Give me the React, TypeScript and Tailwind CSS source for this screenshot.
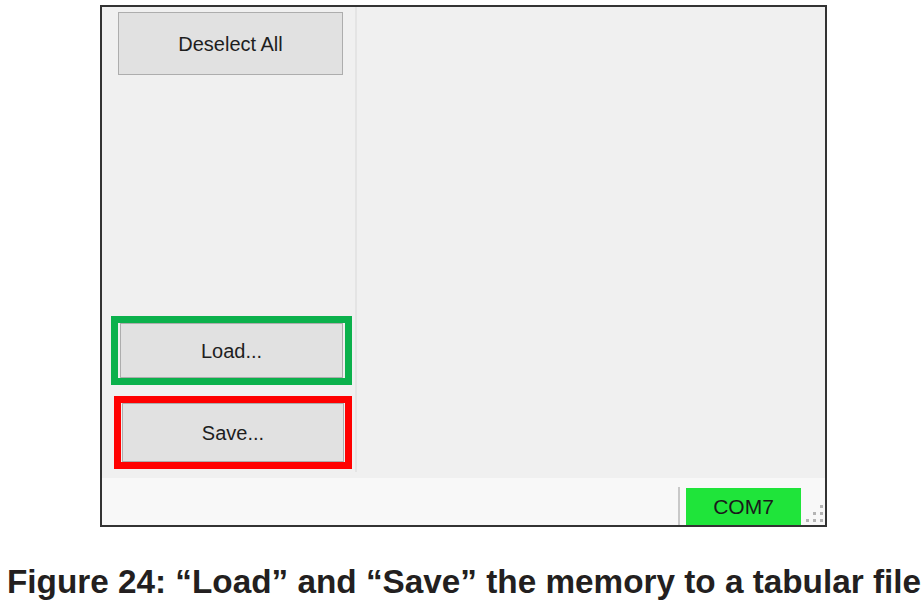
import React from "react";

function WinButton({ label, className }: { label: string; className: string }) {
  return (
    <div
      className={`flex items-center justify-center bg-[#e1e1e1] border border-[#adadad] text-[20px] text-[#1e1e1e] ${className}`}
      style={{ fontFamily: '"Liberation Sans", Arial, sans-serif' }}
    >
      {label}
    </div>
  );
}

function Grip() {
  const dots = [
    [14, 0],
    [7, 7],
    [14, 7],
    [0, 14],
    [7, 14],
    [14, 14],
  ];
  return (
    <svg width="18" height="18" viewBox="0 0 18 18">
      {dots.map(([x, y], i) => (
        <rect key={i} x={x} y={y} width="3" height="3" fill="#b4b4b4" />
      ))}
    </svg>
  );
}

export default function App() {
  return (
    <main className="w-[923px] h-[608px] bg-white overflow-hidden">
      <div className="ml-[100px] mt-[5px] w-[727px] h-[522px] border-2 border-[#333333] bg-[#f0f0f0] flex flex-col">
        <div className="flex h-[471px]">
          <div className="w-[255px] h-[465px] border-r-2 border-[#e4e4e4] flex flex-col">
            <WinButton label="Deselect All" className="ml-[16px] mt-[5px] w-[225px] h-[63px]" />
            <div className="mt-auto ml-[9px] w-[241px] h-[69px] border-[7px] border-[#0bb14c] px-[2px]">
              <WinButton label="Load..." className="w-full h-full" />
            </div>
            <div className="mt-[11px] ml-[12px] w-[238px] h-[73px] border-[7px] border-[#ff0000] px-[1px]">
              <WinButton label="Save..." className="w-full h-full" />
            </div>
            <div className="h-[3px]" />
          </div>
          <div className="flex-1" />
        </div>
        <div className="flex-1 bg-[#f8f8f8] flex items-end">
          <div className="ml-[576px] w-[2px] h-[38px] bg-[#c9c9c9]" />
          <div
            className="ml-[6px] w-[115px] h-[37px] bg-[#1fe43a] flex items-center justify-center text-[21px] text-[#1a1a1a]"
            style={{ fontFamily: '"Liberation Sans", Arial, sans-serif' }}
          >
            COM7
          </div>
          <div className="flex-1 flex justify-end pb-[2px] pr-[1px]">
            <Grip />
          </div>
        </div>
      </div>
      <div
        className="mt-[38px] ml-[7px] text-[33.3px] leading-none font-bold text-[#231f20] whitespace-nowrap"
        style={{ fontFamily: '"Liberation Sans", Arial, sans-serif' }}
      >
        Figure 24: “Load” and “Save” the memory to a tabular file
      </div>
    </main>
  );
}
